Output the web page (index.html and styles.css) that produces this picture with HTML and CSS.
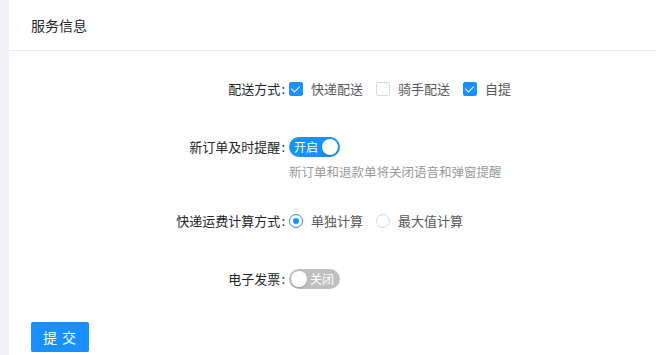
FILE: index.html
```html
<!DOCTYPE html>
<html lang="zh-CN">
<head>
    <meta charset="UTF-8">
    <meta name="viewport" content="width=device-width, initial-scale=1.0">
    <title>服务信息</title>
    <link rel="stylesheet" href="styles.css">
</head>
<body>

<div class="card">
    <div class="card-head">服务信息</div>
    <form class="card-body">
        <div class="form-item">
            <label class="form-label">配送方式</label>
            <div class="form-control">
                <label class="check checked"><span class="check-box"></span>快递配送</label>
                <label class="check"><span class="check-box"></span>骑手配送</label>
                <label class="check checked"><span class="check-box"></span>自提</label>
            </div>
        </div>

        <div class="form-item item-hint">
            <label class="form-label">新订单及时提醒</label>
            <div class="form-control">
                <div class="switch on"><span class="switch-text">开启</span><span class="switch-knob"></span></div>
                <div class="hint">新订单和退款单将关闭语音和弹窗提醒</div>
            </div>
        </div>

        <div class="form-item">
            <label class="form-label">快递运费计算方式</label>
            <div class="form-control">
                <label class="radio checked"><span class="radio-dot"></span>单独计算</label>
                <label class="radio"><span class="radio-dot"></span>最大值计算</label>
            </div>
        </div>

        <div class="form-item item-last">
            <label class="form-label">电子发票</label>
            <div class="form-control">
                <div class="switch off"><span class="switch-knob"></span><span class="switch-text">关闭</span></div>
            </div>
        </div>

        <button type="submit" class="btn">提 交</button>
    </form>
</div>

</body>
</html>
```

FILE: styles.css
```css
body {
    margin: 0;
    background-color: #f0f2f5;
    font-family: "Noto Sans CJK SC", "Noto Sans", sans-serif;
    font-size: 13px;
    color: #333;
}

.card {
    margin-left: 9px;
    min-height: 355px;
    background-color: #fff;
}

.card-head {
    height: 50px;
    line-height: 50px;
    padding: 0 22px;
    font-size: 14px;
    color: #262626;
    border-bottom: 1px solid #e8e8e8;
}

.card-body {
    padding: 26px 22px 0 22px;
}

.form-item {
    display: flex;
    margin-bottom: 34px;
}

.item-hint {
    margin-bottom: 28px;
}

.item-last {
    margin-bottom: 31px;
}

.form-label {
    width: 254px;
    padding-right: 4px;
    text-align: right;
    line-height: 24px;
    color: #262626;
}

.form-label::after {
    content: ":";
    margin-left: 1px;
}

.form-control {
    display: flex;
    flex-wrap: wrap;
    align-items: center;
}

.check, .radio {
    display: flex;
    align-items: center;
    line-height: 24px;
    margin-right: 13px;
    color: #595959;
}

.check-box {
    position: relative;
    width: 12px;
    height: 12px;
    margin-right: 8px;
    border: 1px solid #d9d9d9;
    border-radius: 2px;
}

.check.checked .check-box {
    background-color: #1890ff;
    border-color: #1890ff;
}

.check.checked .check-box::after {
    content: "";
    position: absolute;
    left: 3px;
    top: 1px;
    width: 4px;
    height: 7px;
    border: solid #fff;
    border-width: 0 1.5px 1.5px 0;
    transform: rotate(45deg);
}

.radio-dot {
    position: relative;
    width: 12px;
    height: 12px;
    margin-right: 8px;
    border: 1px solid #d9d9d9;
    border-radius: 50%;
}

.radio.checked .radio-dot {
    border-color: #1890ff;
}

.radio.checked .radio-dot::after {
    content: "";
    position: absolute;
    left: 3px;
    top: 3px;
    width: 6px;
    height: 6px;
    border-radius: 50%;
    background-color: #1890ff;
}

.switch {
    display: flex;
    align-items: center;
    justify-content: space-between;
    width: 51px;
    height: 20px;
    margin: 2px 0;
    box-sizing: border-box;
    padding: 0 2px;
    border-radius: 10px;
    font-size: 12px;
    color: #fff;
}

.switch.on {
    background-color: #1890ff;
    padding-left: 5px;
}

.switch.off {
    background-color: #bfbfbf;
    padding-right: 6px;
}

.switch-text {
    line-height: 20px;
}

.switch-knob {
    width: 16px;
    height: 16px;
    border-radius: 50%;
    background-color: #fff;
    box-shadow: 0 1px 2px rgba(0, 35, 11, 0.2);
}

.hint {
    width: 100%;
    margin-top: 4px;
    line-height: 18px;
    font-size: 12.5px;
    color: #999;
}

.btn {
    width: 58px;
    height: 30px;
    padding: 0;
    border: none;
    border-radius: 2px;
    background-color: #1890ff;
    color: #fff;
    font-family: inherit;
    font-size: 14px;
    letter-spacing: 1px;
    cursor: pointer;
}
```
